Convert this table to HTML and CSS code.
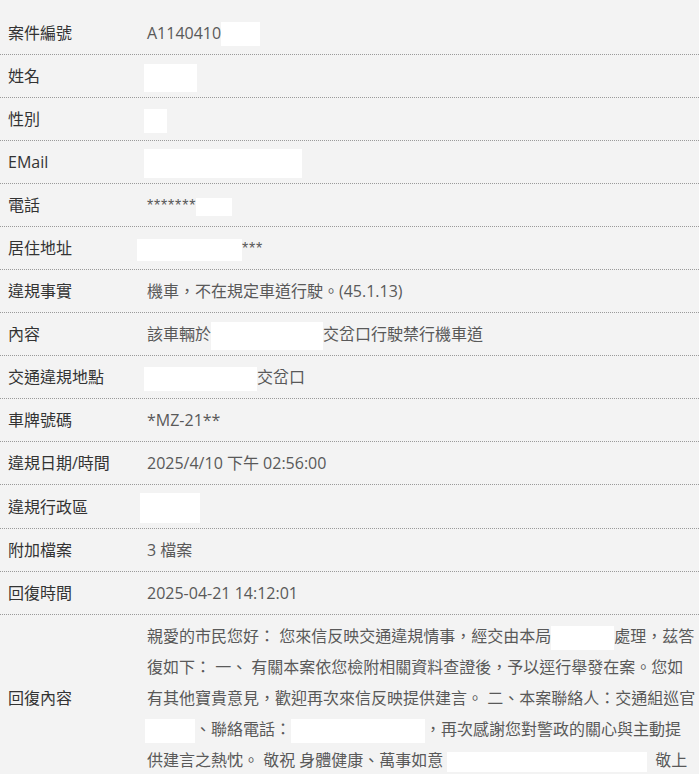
FILE: index.html
```html
<!DOCTYPE html>
<html lang="zh-Hant">
<head>
<meta charset="utf-8">
<title>案件資料</title>
<link rel="stylesheet" href="styles.css">
</head>
<body>
<main class="detail">
  <div class="row"><div class="label">案件編號</div><div class="value">A1140410<span class="mask m-case"></span></div></div>
  <div class="row"><div class="label">姓名</div><div class="value"><span class="mask m-name"></span></div></div>
  <div class="row"><div class="label">性別</div><div class="value"><span class="mask m-sex"></span></div></div>
  <div class="row"><div class="label">EMail</div><div class="value"><span class="mask m-email"></span></div></div>
  <div class="row"><div class="label">電話</div><div class="value"><span class="stars">*******</span><span class="mask m-phone"></span></div></div>
  <div class="row"><div class="label">居住地址</div><div class="value"><span class="mask m-addr"></span><span class="stars">***</span></div></div>
  <div class="row"><div class="label">違規事實</div><div class="value">機車，不在規定車道行駛。(45.1.13)</div></div>
  <div class="row"><div class="label">內容</div><div class="value">該車輛於<span class="mask m-content"></span>交岔口行駛禁行機車道</div></div>
  <div class="row"><div class="label">交通違規地點</div><div class="value"><span class="mask m-place"></span>交岔口</div></div>
  <div class="row"><div class="label">車牌號碼</div><div class="value">*MZ-21**</div></div>
  <div class="row"><div class="label">違規日期/時間</div><div class="value">2025/4/10 下午 02:56:00</div></div>
  <div class="row"><div class="label">違規行政區</div><div class="value"><span class="mask m-dist"></span></div></div>
  <div class="row"><div class="label">附加檔案</div><div class="value">3 檔案</div></div>
  <div class="row"><div class="label">回復時間</div><div class="value">2025-04-21 14:12:01</div></div>
  <div class="row row-long"><div class="label">回復內容</div><div class="value reply">親愛的市民您好： 您來信反映交通違規情事，經交由本局<span class="mask r-1"></span>處理，茲答復如下： 一、 有關本案依您檢附相關資料查證後，予以逕行舉發在案。您如有其他寶貴意見，歡迎再次來信反映提供建言。 二、本案聯絡人：交通組巡官<span class="mask r-2"></span>、聯絡電話：<span class="mask r-3"></span>，再次感謝您對警政的關心與主動提供建言之熱忱。 敬祝 身體健康、萬事如意<span class="mask r-4"></span>敬上</div></div>
</main>
</body>
</html>
```

FILE: styles.css
```css
html, body {
  margin: 0;
  padding: 0;
  background: #f3f3f3;
}

body {
  font-family: "Open Sans", "Noto Sans CJK TC", sans-serif;
  font-size: 16px;
  color: #333;
}

.detail {
  padding-top: 12px;
}

.row {
  display: grid;
  grid-template-columns: 147px 1fr;
  align-items: center;
  border-bottom: 1px dotted #9a9a9a;
  padding: 6px 0 5px;
  line-height: 31px;
}

.label {
  padding-left: 8px;
  color: #333;
  white-space: nowrap;
}

.value {
  color: #595959;
  padding-right: 2px;
  min-height: 31px;
}

.reply {
  line-break: anywhere;
}

.stars {
  font-family: "Liberation Sans", sans-serif;
  letter-spacing: 0.8px;
}

.mask {
  display: inline-block;
  background: #ffffff;
  vertical-align: middle;
  height: 24px;
}

.m-case { width: 39px; margin-top: -2px; }
.m-name { width: 53px; height: 28px; margin-left: -3px; }
.m-sex { width: 23px; margin-left: -3px; }
.m-email { width: 158px; height: 29px; margin-left: -3px; }
.m-phone { width: 36px; height: 18px; }
.m-addr { width: 105px; height: 22px; margin-left: -10px; }
.m-content { width: 112px; height: 28px; }
.m-place { width: 113px; margin-left: -3px; }
.m-dist { width: 60px; height: 30px; margin-left: -7px; }

.r-1 { width: 63px; }
.r-2 { width: 50px; margin-left: -2px; }
.r-3 { width: 134px; }
.r-4 { width: 200px; height: 20px; margin-left: 4px; margin-right: 8px; }
```
